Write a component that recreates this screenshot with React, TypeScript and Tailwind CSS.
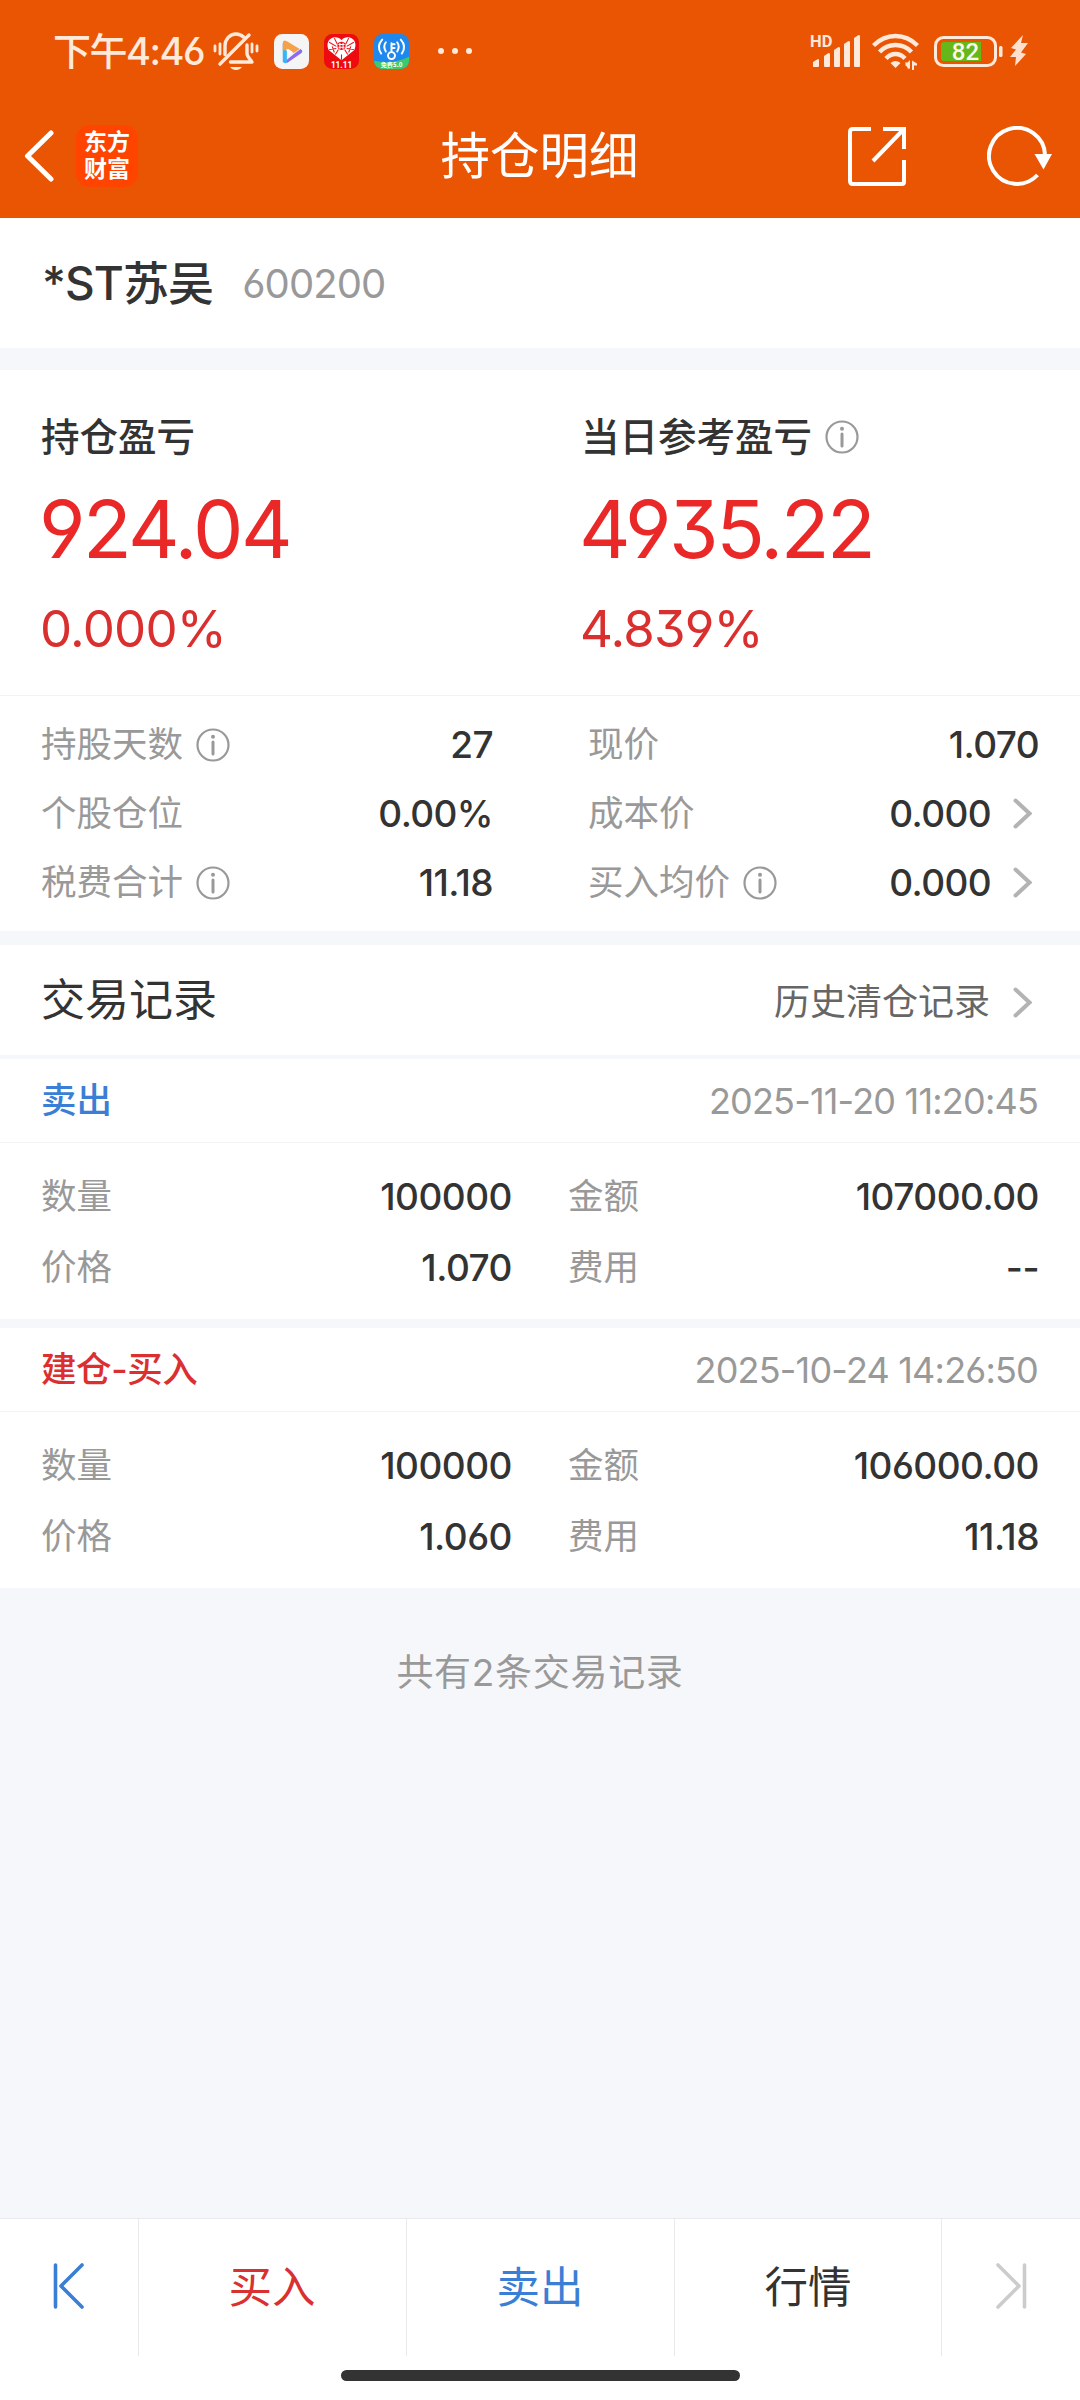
import { type ReactNode } from "react";

const BellOff = () => (
  <svg className="h-[40px] w-[46px]" viewBox="0 0 46 40" fill="none" stroke="#ffe9da" strokeWidth="3.4" strokeLinecap="round">
    <path d="M12 23.5V15C12 8 17 3 23 3c3 0 5.500 1 7.500 3" />
    <path d="M34 14v8.500c0 3 3.500 6 5 8.500H17.500" strokeLinejoin="round" />
    <path d="M36 4L7 33" />
    <path d="M2 15v5M7 13v10M39 13v8M44 15v5" strokeWidth="2.800" />
    <path d="M17 36h12c-1.500 2-3.500 3-6 3s-4.500-1-6-3z" fill="#ffe9da" stroke="none" />
  </svg>
);

const VideoApp = () => (
  <svg className="size-[35px]" viewBox="0 0 34 34">
    <rect width="34" height="34" rx="8" fill="#f6f5f6" />
    <path d="M8.500 9v17.500q1 3 4 1.500V17z" fill="#35b6f5" />
    <path d="M8.500 9q0-4 4-2L25 14.500l-6 4-5.500-4-5 2z" fill="#f5a04a" />
    <path d="M26 14.500q3 2.500 0 4.500l-13 9q-1.500 0-.5-3l8-6.500z" fill="#8b6cf0" />
    <path d="M14 14.500v6l4.500-2.800z" fill="#fff" />
  </svg>
);

const ShoppingApp = () => (
  <svg className="size-[35px]" viewBox="0 0 34 34">
    <rect width="34" height="34" rx="8" fill="#ee0a0f" />
    <path d="M17 25.500L4.500 15.500C2 10 4 5 9 3.500c3-.8 6 0 8 2.500 2-2.500 5-3.300 8-2.500 5 1.500 7 6.500 4.500 12z" fill="#fff" />
    <path d="M5 8l7 4M10 4l3 6M29 8l-7 4M24 4l-3 6M5 15l7-1M29 15l-7-1M11 20l3-5M23 20l-3-5M17 20v5M8 12l2 6M26 12l-2 6" stroke="#ee0a0f" strokeWidth="1" />
    <circle cx="17" cy="11.500" r="4" fill="#ee0a0f" />
    <path d="M15.500 8.500v6M18.500 8.500v6M14 10.200h6M14 12.800h6" stroke="#fff" strokeWidth="1" />
    <text x="17" y="33" textAnchor="middle" fontSize="8" fontWeight="700" fill="#fff" fontFamily="Roboto, sans-serif">11.11</text>
  </svg>
);

const WifiKeyApp = () => (
  <svg className="size-[35px]" viewBox="0 0 34 34">
    <defs>
      <clipPath id="key-clip">
        <rect width="34" height="34" rx="8" />
      </clipPath>
    </defs>
    <g clipPath="url(#key-clip)">
      <rect width="34" height="34" fill="#1e88ee" />
      <path d="M0 26q18 4 34-4v12H0z" fill="#3ccb6c" />
    </g>
    <g fill="none" stroke="#fff" strokeWidth="1.900" strokeLinecap="round">
      <circle cx="17" cy="21" r="3.400" />
      <path d="M17 17.500V9M17 10h3M17 13.500h3" />
      <path d="M11.500 8q-3 4 0 9M8 5.500q-6 6.500-1 13.500M22.500 8q3 4 0 9M26 5.500q6 6.500 1 13.500" />
    </g>
    <text x="17" y="32.500" textAnchor="middle" fontSize="6" fontWeight="700" fill="#fff" fontFamily="'Noto Sans CJK SC', sans-serif">免费5.0</text>
  </svg>
);

const Signal = () => (
  <svg className="h-[34px] w-[52px] overflow-visible" viewBox="0 0 52 34" fill="#ffe9da">
    <text x="0" y="13" fontSize="16.500" fontWeight="700" fontFamily="Roboto, sans-serif">HD</text>
    <path d="M3 33v-5l5-3q1 0 1 1v6q0 1-1 1zM14 32V22l4.500-3q1.500 0 1.500 1v12q0 1-1 1h-4q-1 0-1-1zM24 32V16l4.500-3q1.500 0 1.500 1v18q0 1-1 1h-4q-1 0-1-1zM34 32V10l4.500-3q1.500 0 1.500 1v24q0 1-1 1h-4q-1 0-1-1zM44 32V4l4.500-3Q50 1 50 2v30q0 1-1 1h-4q-1 0-1-1z" />
  </svg>
);

const Wifi = () => (
  <svg className="h-[37px] w-[47px]" viewBox="0 0 47 37" fill="none" stroke="#ffe9da" strokeWidth="4.400">
    <path d="M1.500 12.500Q11 3 23.500 3t22 9.500" />
    <path d="M7.500 19Q14 12 23.500 12t16 7" />
    <path d="M14 25.500q4-4.500 9.500-4.500t9.500 4.500" />
    <path d="M23.500 35l-5-5q5-4 10 0z" fill="#ffe9da" stroke="none" />
    <path d="M33 29.500h3.500V37zM40 37v-9.500l5 3v2h-3V37zM38 27v9l-5-4z" fill="#ffe9da" stroke="none" />
  </svg>
);

const Battery = () => (
  <svg className="h-[31px] w-[70px]" viewBox="0 0 70 31">
    <rect x="1.500" y="1.500" width="60" height="28" rx="8" fill="none" stroke="#ffe9da" strokeWidth="3" />
    <path d="M10 6h37v19H10q-3 0-3-3V9q0-3 3-3z" fill="#65b81a" />
    <rect x="65" y="10" width="3.500" height="11" rx="1.500" fill="#ffe9da" />
    <text x="31.500" y="24" textAnchor="middle" fontSize="24" fontWeight="500" fill="#fff5ec" fontFamily="Roboto, sans-serif">82</text>
  </svg>
);

const Bolt = () => (
  <svg className="h-[32px] w-[18px]" viewBox="0 0 18 32" fill="#ffe0cf">
    <path d="M13 0L1 13l5 1.500-6 7.500h6L5 31l11-12-5-1.500L18 8h-7z" />
  </svg>
);

const Back = () => (
  <svg className="h-[52px] w-[30px]" viewBox="0 0 30 52" fill="none" stroke="#fff" strokeWidth="5" strokeLinecap="round" strokeLinejoin="round">
    <path d="M27 3L3.500 26 27 49" />
  </svg>
);

const Share = () => (
  <svg className="size-[60px]" viewBox="0 0 60 60" fill="none" stroke="#fff" strokeWidth="4">
    <path d="M24 3H6q-3 0-3 3v49q0 3 3 3h49q2 0 2-2V34" />
    <path d="M36 3h21v20M56 4L26 35" />
  </svg>
);

const Refresh = () => (
  <svg className="h-[60px] w-[66px]" viewBox="0 0 66 60" fill="none" stroke="#fff" strokeWidth="4">
    <path d="M50.500 49A28 28 0 1 1 58 29" />
    <path d="M47.500 28h17.500l-8.500 15.500z" fill="#fff" stroke="none" />
  </svg>
);

const Info = () => (
  <svg className="size-[34px]" viewBox="0 0 34 34" fill="none" stroke="#999">
    <circle cx="17" cy="17" r="15.500" strokeWidth="2.200" />
    <circle cx="17" cy="8.800" r="2" fill="#999" stroke="none" />
    <path d="M17 14v12" strokeWidth="3" strokeLinecap="round" />
  </svg>
);

const Chevron = () => (
  <svg className="mr-1.5 ml-[23px] h-[31px] w-[19px]" viewBox="0 0 19 31" fill="none" stroke="#b3b3b3" strokeWidth="4" strokeLinecap="round">
    <path d="M2.500 2.500l14 13-14 13" />
  </svg>
);

const Skip = ({ className }: { className: string }) => (
  <svg className={className} viewBox="0 0 32 46" fill="none" stroke="currentColor" strokeWidth="3.600" strokeLinecap="round" strokeLinejoin="round">
    <path d="M3.500 2v42M30 2L9 23l21 21" />
  </svg>
);

type StatProps = {
  label: string;
  value: string;
  info?: boolean;
  arrow?: boolean;
};

const Stat = ({ label, value, info, arrow }: StatProps) => (
  <div className="flex h-[69px] items-center">
    <span className="text-[35.500px] text-[#999]">{label}</span>
    {info && (
      <span className="ml-[13px]">
        <Info />
      </span>
    )}
    <span className="-mr-px ml-auto text-[37px] font-medium tracking-[-0.6px]">{value}</span>
    {arrow && <Chevron />}
  </div>
);

type Trade = {
  kind: string;
  time: string;
  amount: string;
  price: string;
  total: string;
  fee: string;
};

const trades: Trade[] = [
  {
    kind: "卖出",
    time: "2025-11-20 11:20:45",
    amount: "100000",
    price: "1.070",
    total: "107000.00",
    fee: "--",
  },
  {
    kind: "建仓-买入",
    time: "2025-10-24 14:26:50",
    amount: "100000",
    price: "1.060",
    total: "106000.00",
    fee: "11.18",
  },
];

const Cell = ({ label, value }: { label: string; value: string }) => (
  <div className="flex h-[71px] items-center justify-between">
    <span className="text-[35.500px] text-[#999]">{label}</span>
    <span className="text-[37px] font-medium tracking-[-0.500px]">{value}</span>
  </div>
);

const TradeCard = ({ trade }: { trade: Trade }) => (
  <section className="bg-white">
    <div className="flex h-[84px] items-center justify-between border-b border-[#f2f3f5] pt-px pr-[42px] pl-[41px]">
      <span
        className={
          trade.kind === "卖出"
            ? "text-[35.500px] font-medium text-[#3a7fd5]"
            : "text-[35.500px] font-medium tracking-[-0.4px] text-[#dc2f2f]"
        }
      >
        {trade.kind}
      </span>
      <span className="text-[36px] tracking-[-0.800px] text-[#999]">{trade.time}</span>
    </div>
    <div className="grid h-[176px] grid-cols-[471px_471px] content-start gap-x-[56px] pt-[18px] pl-[41px]">
      <Cell label="数量" value={trade.amount} />
      <Cell label="金额" value={trade.total} />
      <Cell label="价格" value={trade.price} />
      <Cell label="费用" value={trade.fee} />
    </div>
  </section>
);

const Profit = ({ title, value, rate }: { title: ReactNode; value: string; rate: string }) => (
  <div className="pl-[41px]">
    <div className="flex h-[60px] items-center text-[38.500px] font-medium">{title}</div>
    <div className="-ml-0.5 flex h-[124px] items-center text-[80px] tracking-[-2.500px] text-[#e92827]">{value}</div>
    <div className="-ml-px flex h-[74px] items-center text-[51px] tracking-[-0.8px] text-[#da2f2f]">{rate}</div>
  </div>
);

export default function App() {
  return (
    <div className="flex h-[2400px] w-[1080px] flex-col overflow-hidden bg-[#f6f7fa] font-[Inter,'Noto_Sans_CJK_SC',sans-serif] leading-none whitespace-nowrap text-[#333] [font-feature-settings:'cv03','cv04','cv09']">
      <header className="h-[218px] bg-[#ea5504] text-white">
        <div className="flex h-[94px] items-center pt-2 pr-[52px] pl-[53px]">
          <span className="w-[160px] text-[38px] font-medium tracking-[-1.500px] text-[#ffe9da]">下午4:46</span>
          <BellOff />
          <div className="ml-[15px] flex gap-[15px]">
            <VideoApp />
            <ShoppingApp />
            <WifiKeyApp />
          </div>
          <div className="ml-[29px] flex gap-2">
            <i className="size-1.5 rounded-full bg-[#ffe9da]" />
            <i className="size-1.5 rounded-full bg-[#ffe9da]" />
            <i className="size-1.5 rounded-full bg-[#ffe9da]" />
          </div>
          <div className="ml-auto flex items-center">
            <Signal />
            <span className="ml-2.5">
              <Wifi />
            </span>
            <span className="ml-[15px]">
              <Battery />
            </span>
            <span className="ml-1.5">
              <Bolt />
            </span>
          </div>
        </div>
        <div className="grid h-[123px] grid-cols-3 items-center pr-[27px] pl-6">
          <div className="flex items-center">
            <Back />
            <div className="ml-[22px] flex size-[62px] flex-col items-center justify-center rounded-[14px] bg-[#ff4400] text-[23px] leading-[27px] font-bold">
              <span>东方</span>
              <span>财富</span>
            </div>
          </div>
          <h1 className="pt-0.5 pl-0.5 text-center text-[49.500px]">持仓明细</h1>
          <div className="flex items-center justify-end gap-[80px]">
            <Share />
            <Refresh />
          </div>
        </div>
      </header>

      <div className="flex h-[130px] items-center bg-white px-[42px]">
        <span className="text-[46px] font-medium tracking-[-0.900px]">*ST苏吴</span>
        <span className="ml-[29px] pt-0.5 text-[40px] tracking-[-0.900px] text-[#999]">600200</span>
      </div>

      <section className="mt-[22px] bg-white">
        <div className="grid h-[326px] grid-cols-2 border-b border-[#f2f3f5] pt-[37px]">
          <Profit title="持仓盈亏" value="924.04" rate="0.000%" />
          <Profit
            title={
              <>
                当日参考盈亏
                <span className="ml-[13px]">
                  <Info />
                </span>
              </>
            }
            value="4935.22"
            rate="4.839%"
          />
        </div>
        <div className="grid h-[235px] grid-cols-[451px_450px] gap-x-[96px] pt-[14px] pl-[41px]">
          <div>
            <Stat label="持股天数" value="27" info />
            <Stat label="个股仓位" value="0.00%" />
            <Stat label="税费合计" value="11.18" info />
          </div>
          <div>
            <Stat label="现价" value="1.070" />
            <Stat label="成本价" value="0.000" arrow />
            <Stat label="买入均价" value="0.000" info arrow />
          </div>
        </div>
      </section>

      <div className="mt-[14px] mb-1 flex h-[110px] items-center justify-between bg-white pr-[42px] pl-[41px]">
        <h2 className="text-[44px]">交易记录</h2>
        <div className="flex items-center pt-1 text-[36px] text-[#666]">
          历史清仓记录
          <Chevron />
        </div>
      </div>

      <div className="flex flex-col gap-[9px]">
        {trades.map((trade) => (
          <TradeCard key={trade.time} trade={trade} />
        ))}
      </div>

      <p className="mt-[66px] text-center text-[37px] tracking-[0.700px] text-[#999]">共有2条交易记录</p>

      <footer className="mt-auto h-[182px] border-t border-[#e9eaec] bg-white">
        <nav className="flex h-[137px] divide-x divide-[#e9eaec] text-[43.500px]">
          <div className="flex w-[139px] items-center pb-1 pl-[52px] text-[#3a7fd5]">
            <Skip className="h-[46px] w-[32px]" />
          </div>
          <div className="flex flex-1 items-center justify-center pr-px text-[#d93030]">买入</div>
          <div className="flex flex-1 items-center justify-center pr-px text-[#3a7fd5]">卖出</div>
          <div className="flex flex-1 items-center justify-center">行情</div>
          <div className="flex w-[138px] items-center justify-end pr-[52px] pb-1 text-[#ccc]">
            <Skip className="h-[46px] w-[32px] rotate-180" />
          </div>
        </nav>
        <div className="mx-auto mt-[14px] h-[11px] w-[399px] rounded-full bg-[#333]" />
      </footer>
    </div>
  );
}
